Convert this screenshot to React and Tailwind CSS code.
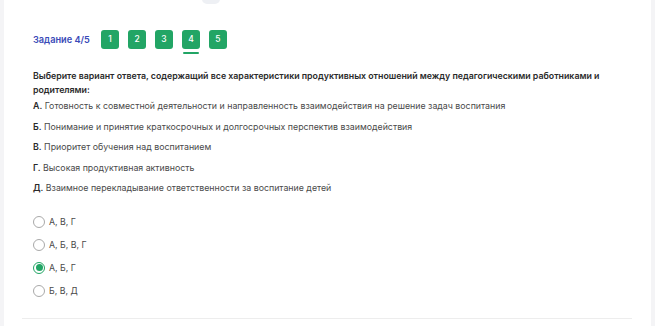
import React from "react";

const options = [
  { l: "А.", t: "Готовность к совместной деятельности и направленность взаимодействия на решение задач воспитания" },
  { l: "Б.", t: "Понимание и принятие краткосрочных и долгосрочных перспектив взаимодействия" },
  { l: "В.", t: "Приоритет обучения над воспитанием" },
  { l: "Г.", t: "Высокая продуктивная активность" },
  { l: "Д.", t: "Взаимное перекладывание ответственности за воспитание детей" },
];

const answers = ["А, В, Г", "А, Б, В, Г", "А, Б, Г", "Б, В, Д"];

export default function App() {
  return (
    <div className="w-[655px] h-[326px] bg-[#f4f4f6] flex overflow-hidden" style={{ fontFamily: "Inter, 'Noto Sans', sans-serif" }}>
      <div className="ml-[4px] w-[647px] h-full bg-white relative flex flex-col">
        <div className="absolute left-[198px] top-[-6px] w-[18px] h-[10px] rounded-[5px] bg-[#eef0f4]" />
        <div className="flex items-center pl-[29px] pt-[30px]">
          <span className="text-[9.2px] font-semibold text-[#3a4bb8] w-[68px]">Задание 4/5</span>
          <div className="flex gap-[9px]">
            {[1, 2, 3, 4, 5].map((n) => (
              <div key={n} className="relative">
                <div className="w-[18px] h-[19px] rounded-[3px] bg-[#22a565] text-white text-[8.5px] font-medium flex items-center justify-center">
                  {n}
                </div>
                {n === 4 && <div className="absolute left-[1px] top-[22px] w-[16px] h-[2px] rounded bg-[#22a565]" />}
              </div>
            ))}
          </div>
        </div>
        <div className="pl-[29px] pt-[20px] pr-[40px]">
          <p className="text-[8.8px] leading-[14px] font-semibold text-[#2a2a2a]">
            Выберите вариант ответа, содержащий все характеристики продуктивных отношений между педагогическими работниками и родителями:
          </p>
          <div className="flex flex-col gap-[8.5px] mt-[3px]">
            {options.map((o) => (
              <p key={o.l} className="text-[8.8px] leading-[12px] text-[#4a4a4a]">
                <span className="font-semibold text-[#2a2a2a]">{o.l}</span> {o.t}
              </p>
            ))}
          </div>
          <div className="flex flex-col gap-[10px] mt-[21px]">
            {answers.map((a, i) => (
              <div key={a} className="flex items-center gap-[4px] h-[13px]">
                {i === 2 ? (
                  <div className="w-[12px] h-[12px] rounded-full border border-[#22a565] flex items-center justify-center">
                    <div className="w-[7px] h-[7px] rounded-full bg-[#22a565]" />
                  </div>
                ) : (
                  <div className="w-[12px] h-[12px] rounded-full border border-[#a9a9a9]" />
                )}
                <span className="text-[8.8px] text-[#4a4a4a]">{a}</span>
              </div>
            ))}
          </div>
        </div>
        <div className="absolute left-[18px] top-[318px] w-[610px] h-[1px] bg-[#ededed]" />
      </div>
    </div>
  );
}
